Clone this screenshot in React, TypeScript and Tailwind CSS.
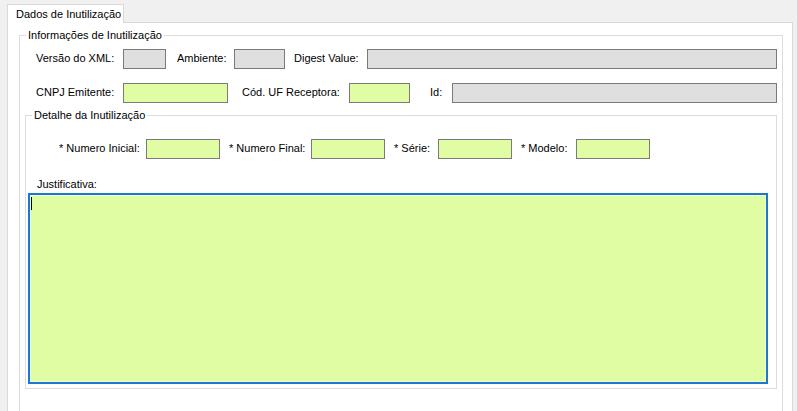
import React from 'react';

const gray = 'h-[20px] border border-[#7a7a7a] bg-[#dfdfdf]';
const green = 'h-[20px] border border-[#7a7a7a] bg-[#e1fda4]';

function Label({ text, className }: { text: string; className: string }) {
  return <span className={`shrink-0 leading-[13px] ${className}`}>{text}</span>;
}

function GroupBox({
  title,
  className,
  children,
}: {
  title: string;
  className: string;
  children: React.ReactNode;
}) {
  return (
    <fieldset className={`border border-[#dcdcdc] p-0 m-0 min-w-0 ${className}`}>
      <legend className="ml-[6px] px-[2px] leading-[13px]">{title}</legend>
      {children}
    </fieldset>
  );
}

export default function App() {
  return (
    <div className="w-[797px] h-[411px] overflow-hidden bg-[#f0f0f0] pt-[4px] pl-[7px] pr-[4px] font-['Liberation_Sans',Arial,sans-serif] text-[11px] text-black flex flex-col">
      <div className="relative z-10 -mb-px w-[117px] h-[21px] bg-white border border-b-0 border-[#d9d9d9] pl-[8px] pt-[1px] flex items-center">
        Dados de Inutilização
      </div>
      <div className="flex-1 bg-white border border-[#d9d9d9] pl-[11px] pr-[9px]">
        <GroupBox title="Informações de Inutilização" className="mt-[6px] pb-[60px]">
          <div className="pt-[7px] pl-[16px] pr-[5px] flex items-center">
            <Label text="Versão do XML:" className="w-[87px]" />
            <div className={`${gray} w-[43px]`} />
            <Label text="Ambiente:" className="ml-[11px] w-[57px]" />
            <div className={`${gray} w-[51px]`} />
            <Label text="Digest Value:" className="ml-[9px] w-[73px]" />
            <div className={`${gray} flex-1`} />
          </div>
          <div className="mt-[14px] pl-[16px] pr-[5px] flex items-center">
            <Label text="CNPJ Emitente:" className="w-[87px]" />
            <div className={`${green} w-[105px]`} />
            <Label text="Cód. UF Receptora:" className="ml-[14px] w-[107px]" />
            <div className={`${green} w-[61px]`} />
            <Label text="Id:" className="ml-[20px] w-[22px]" />
            <div className={`${gray} flex-1`} />
          </div>
          <div className="mt-[6px] px-[5px]">
            <GroupBox title="Detalhe da Inutilização" className="pb-[4px]">
              <div className="pt-[17px] pl-[33px] flex items-center">
                <Label text="* Numero Inicial:" className="w-[87px]" />
                <div className={`${green} w-[74px]`} />
                <Label text="* Numero Final:" className="ml-[9px] w-[82px]" />
                <div className={`${green} w-[74px]`} />
                <Label text="* Série:" className="ml-[9px] w-[44px]" />
                <div className={`${green} w-[74px]`} />
                <Label text="* Modelo:" className="ml-[9px] w-[55px]" />
                <div className={`${green} w-[74px]`} />
              </div>
              <div className="mt-[19px] pl-[11px] leading-[13px]">Justificativa:</div>
              <div className="mt-[2px] ml-[2px] mr-[8px] h-[191px] border-2 border-[#1a78d2] bg-[#e1fda4] pt-[2px] pl-[1px] shadow-[inset_0_0_0_1px_#eefdc8]">
                <div className="w-px h-[13px] bg-black" />
              </div>
            </GroupBox>
          </div>
        </GroupBox>
      </div>
    </div>
  );
}
